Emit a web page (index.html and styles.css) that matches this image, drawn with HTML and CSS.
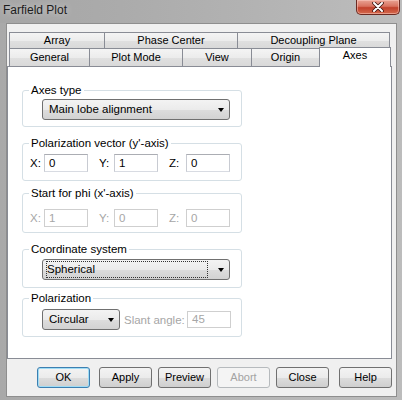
FILE: index.html
```html
<!DOCTYPE html>
<html>
<head>
<meta charset="utf-8">
<link rel="stylesheet" href="styles.css">
</head>
<body>
<div class="window">
  <div class="titlebar">
    <span class="title">Farfield Plot</span>
    <div class="close">
      <svg width="14" height="10" viewBox="0 0 14 10"><path d="M3 1 L11 9 M11 1 L3 9" stroke="#3a1410" stroke-width="3.6" stroke-linecap="round"/><path d="M3 1 L11 9 M11 1 L3 9" stroke="#ffffff" stroke-width="2" stroke-linecap="round"/></svg>
    </div>
  </div>
  <div class="client">
    <div class="tabs">
      <div class="tabrow back">
        <div class="tab w-array">Array</div>
        <div class="tab w-phase">Phase Center</div>
        <div class="tab w-decoup last">Decoupling Plane</div>
      </div>
      <div class="tabrow front">
        <div class="tab w-general">General</div>
        <div class="tab w-plotmode">Plot Mode</div>
        <div class="tab w-view">View</div>
        <div class="tab w-origin">Origin</div>
        <div class="tab w-axes selected">Axes</div>
      </div>
    </div>
    <div class="panel">
      <fieldset class="group g1">
        <legend>Axes type</legend>
        <div class="combo-row">
          <div class="combo wide"><span class="ctext">Main lobe alignment</span><span class="arrow"></span></div>
        </div>
      </fieldset>
      <fieldset class="group g2">
        <legend>Polarization vector (y'-axis)</legend>
        <div class="coord-row">
          <span class="lbl lx">X:</span><span class="field">0</span>
          <span class="lbl ly">Y:</span><span class="field">1</span>
          <span class="lbl lz">Z:</span><span class="field">0</span>
        </div>
      </fieldset>
      <fieldset class="group g3">
        <legend>Start for phi (x'-axis)</legend>
        <div class="coord-row disabled">
          <span class="lbl lx">X:</span><span class="field">1</span>
          <span class="lbl ly">Y:</span><span class="field">0</span>
          <span class="lbl lz">Z:</span><span class="field">0</span>
        </div>
      </fieldset>
      <fieldset class="group g4">
        <legend>Coordinate system</legend>
        <div class="combo-row">
          <div class="combo wide"><span class="ctext focus">Spherical</span><span class="arrow"></span></div>
        </div>
      </fieldset>
      <fieldset class="group g5">
        <legend>Polarization</legend>
        <div class="combo-row pol-row">
          <div class="combo narrow"><span class="ctext">Circular</span><span class="arrow"></span></div>
          <span class="slant">Slant angle:</span>
          <span class="field dis">45</span>
        </div>
      </fieldset>
    </div>
    <div class="buttons">
      <div class="btn default b-ok">OK</div>
      <div class="btn b-apply">Apply</div>
      <div class="btn b-preview">Preview</div>
      <div class="btn disabled b-abort">Abort</div>
      <div class="btn b-close">Close</div>
      <div class="btn b-help">Help</div>
    </div>
  </div>
</div>
</body>
</html>
```
FILE: styles.css
```css
* { box-sizing: border-box; }
html, body {
  margin: 0;
  padding: 0;
  width: 402px;
  height: 400px;
  overflow: hidden;
  font-family: "Liberation Sans", Arial, sans-serif;
  font-size: 11px;
  color: #000;
}
.window {
  width: 402px;
  height: 400px;
  background: linear-gradient(90deg, #a9a9a9 0%, #b3b3b3 40%, #bcbcbc 100%);
  display: flex;
  flex-direction: column;
}
.titlebar {
  height: 23px;
  display: flex;
  align-items: flex-start;
  justify-content: space-between;
  background: linear-gradient(90deg, #a6a6a6 0%, #ababab 30%, #b2b2b2 60%, #bdbdbd 100%);
}
.title {
  font-size: 12px;
  color: #1c1c1c;
  margin: 3px 0 0 3px;
  line-height: 14px;
  text-shadow: 0 0 6px rgba(255,255,255,0.55);
}
.close {
  width: 44px;
  height: 15px;
  margin-right: 2px;
  border: 1px solid #6b2a22;
  border-top: none;
  border-radius: 0 0 5px 5px;
  background: linear-gradient(#e9a394 0%, #d9725f 45%, #c2412c 55%, #d46a4e 100%);
  display: flex;
  align-items: center;
  justify-content: center;
  box-shadow: inset 0 0 0 1px rgba(255,210,200,0.5);
}
.client {
  flex: 1;
  margin: 0 5px 3px 6px;
  background: #f0f0f0;
  border: 1px solid #8e8e8e;
  display: flex;
  flex-direction: column;
}
.tabs {
  margin: 8px 0 0 2px;
}
.tabrow {
  display: flex;
}
.tab {
  border-left: 1px solid #898c95;
  border-top: 1px solid #898c95;
  background: linear-gradient(#f4f4f4 0%, #ececec 50%, #e0e0e0 51%, #d9d9d9 100%);
  text-align: center;
  white-space: nowrap;
}
.tab.last { border-right: 1px solid #898c95; }
.back .tab { height: 16px; line-height: 15px; }
.front .tab { height: 18px; line-height: 17px; }
.w-array { width: 95px; }
.w-phase { width: 133px; }
.w-decoup { width: 153px; }
.w-general { width: 80px; }
.w-plotmode { width: 93px; }
.w-view { width: 69px; }
.w-origin { width: 68px; }
.w-axes { width: 72px; }
.tab.selected {
  position: relative;
  z-index: 2;
  background: #fff;
  border-right: 1px solid #898c95;
  margin-top: -1px;
  height: 20px;
  margin-bottom: -1px;
  line-height: 15px;
}
.panel {
  height: 293px;
  margin-right: 4px;
  background: #fff;
  border: 1px solid #898c95;
  padding: 16px 0 0 14px;
}
.group {
  width: 220px;
  margin: 0;
  padding: 0;
  border: 1px solid #d5dfe5;
  border-radius: 3px;
}
.group legend {
  font-size: 11.5px;
  line-height: 14px;
  padding: 0 2px;
  margin-left: 6px;
  color: #000;
}
.g1 { padding: 2px 0 6px 0; }
.g2 { margin-top: 9px; padding: 4px 0 8px 0; }
.g3 { margin-top: 5px; padding: 9px 0 5px 0; }
.g4 { margin-top: 9px; padding: 3px 0 7px 0; }
.g5 { margin-top: 3px; padding: 4px 0 6px 0; }
.combo-row {
  display: flex;
  align-items: center;
  padding-left: 19px;
}
.combo {
  height: 21px;
  border: 1px solid #707070;
  border-radius: 3px;
  background: linear-gradient(#f3f3f3 0%, #ebebeb 50%, #dddddd 51%, #d2d2d2 100%);
  display: flex;
  align-items: center;
  justify-content: space-between;
  padding: 0 5px 0 3px;
  font-size: 11.5px;
}
.combo.wide { width: 188px; }
.combo.narrow { width: 78px; }
.ctext {
  padding: 1px 2px;
  line-height: 13px;
  border: 1px dotted transparent;
}
.ctext.focus { border-color: #333; flex: 1; margin-right: 10px; padding-left: 0; }
.arrow {
  width: 0;
  height: 0;
  border-left: 3.5px solid transparent;
  border-right: 3.5px solid transparent;
  border-top: 4px solid #000;
}
.coord-row {
  display: flex;
  align-items: center;
  padding-left: 7px;
  font-size: 11.5px;
}
.lbl { display: inline-block; }
.lx { width: 14px; }
.ly { width: 15px; margin-left: 11px; }
.lz { width: 17px; margin-left: 11px; }
.field {
  width: 44px;
  height: 18px;
  border: 1px solid #abadb3;
  border-bottom-color: #d8dbe2;
  border-left-color: #c8cbd2;
  border-right-color: #c8cbd2;
  background: #fff;
  padding-left: 4px;
  line-height: 16px;
  font-size: 11.5px;
}
.disabled .lbl { color: #a6a6a6; }
.disabled .field, .field.dis {
  border-color: #cfcfcf;
  color: #a6a6a6;
}
.pol-row .field { height: 17px; line-height: 15px; }
.slant {
  color: #a6a6a6;
  margin-left: 4px;
  width: 63px;
  font-size: 11.5px;
}
.buttons {
  display: flex;
  margin: 8px 0 0 30px;
}
.btn {
  width: 53px;
  height: 21px;
  border: 1px solid #707070;
  border-radius: 3px;
  background: linear-gradient(#f3f3f3 0%, #ebebeb 50%, #dddddd 51%, #cfcfcf 100%);
  text-align: center;
  line-height: 19px;
}
.btn.default {
  border-color: #3c7fb1;
  box-shadow: inset 0 0 0 1px #9fdcf5;
}
.btn.disabled {
  border-color: #b6babd;
  background: #f4f4f4;
  color: #a3a3a3;
}
.b-apply { margin-left: 9px; }
.b-preview, .b-abort, .b-close { margin-left: 6px; }
.b-help { margin-left: 10px; }
```
